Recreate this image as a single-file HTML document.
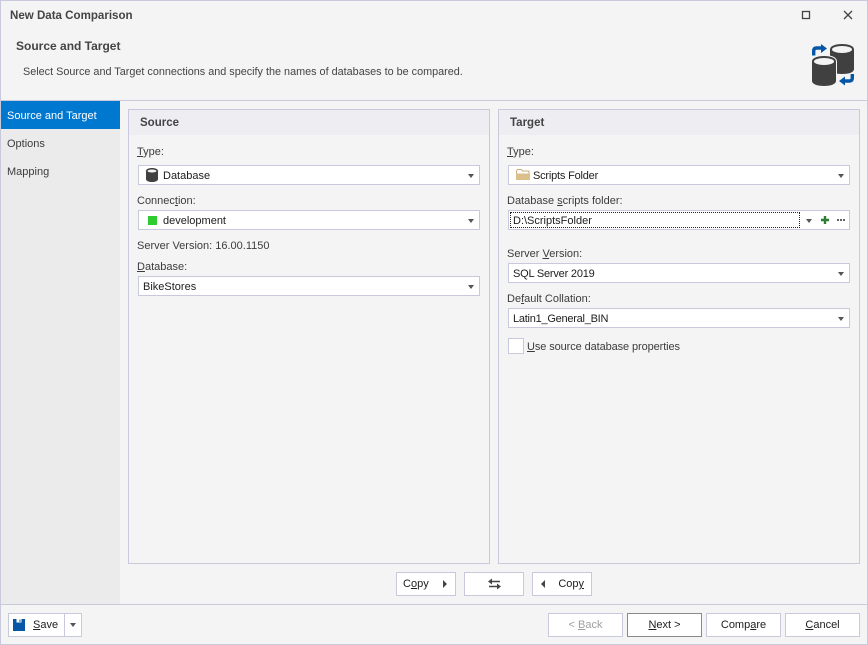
<!DOCTYPE html>
<html><head><meta charset="utf-8">
<style>
html,body{margin:0;padding:0;width:868px;height:645px;overflow:hidden;background:#f4f4f4}
body{position:relative;font-family:"Liberation Sans",sans-serif;font-size:11px;color:#3c3c3c}
.a{position:absolute}
.t{position:absolute;white-space:nowrap;line-height:14px;margin-top:1px}
.box{position:absolute;background:#fff;border:1px solid #c9c9de;box-sizing:border-box}
.arr{position:absolute;width:0;height:0;border-left:3px solid transparent;border-right:3px solid transparent;border-top:4px solid #555}
.btn{position:absolute;background:#fff;border:1px solid #c9c9de;box-sizing:border-box;text-align:center;line-height:23px;color:#202020;height:24px}
u{text-underline-offset:1px}
</style></head><body>
<div class="a" style="left:0;top:0;width:868px;height:645px;border:1px solid #c9c9de;box-sizing:border-box"></div>
<div class="t" style="left:10px;top:8px;font-weight:bold;font-size:11.56px;color:#444">New Data Comparison</div>
<div class="t" style="left:16px;top:38px;font-weight:bold;font-size:12px;color:#444">Source and Target</div>
<div class="t" style="left:23px;top:64px;color:#444;font-size:10.83px">Select Source and Target connections and specify the names of databases to be compared.</div>
<svg class="a" style="left:800px;top:8px" width="60" height="16"><rect x="2.500" y="3.500" width="7" height="7" fill="none" stroke="#444" stroke-width="1.300"/><path d="M44 3l8 8M52 3l-8 8" stroke="#444" stroke-width="1.300"/></svg>
<svg class="a" style="left:808px;top:40px" width="50" height="50">
<path d="M22 9.500C22 6 27 4 34 4s12 2 12 5.500V29c0 3-4 5-12 5s-12-2-12-5z" fill="#404040"/><ellipse cx="34" cy="9.500" rx="10" ry="3.500" fill="#f4f4f4"/>
<path d="M4 21.500C4 18 9 16 16 16s12 2 12 5.500V41c0 3-5 5-12 5S4 44 4 41z" fill="#404040" stroke="#f4f4f4" stroke-width="2" paint-order="stroke"/><ellipse cx="16" cy="21.500" rx="10" ry="3.500" fill="#f4f4f4"/>
<path d="M5.700 15.500V11q0-3 3-3h5" fill="none" stroke="#0556a5" stroke-width="3.400"/><path d="M13 4l6 4.500-6 4.500z" fill="#0556a5"/>
<path d="M44.300 34v4q0 3-3 3h-5" fill="none" stroke="#0556a5" stroke-width="3.400"/><path d="M37 36.500l-6 4.500 6 4.500z" fill="#0556a5"/>
</svg>
<div class="a" style="left:0;top:100px;width:868px;height:1px;background:#c9c9de"></div>
<div class="a" style="left:1px;top:101px;width:119px;height:503px;background:#ebebeb"></div>
<div class="a" style="left:1px;top:101px;width:119px;height:28px;background:#0078d0"></div>
<div class="t" style="left:7px;top:108px;color:#fff">Source and Target</div>
<div class="t" style="left:7px;top:136px">Options</div>
<div class="t" style="left:7px;top:164px">Mapping</div>

<div class="a" style="left:128px;top:109px;width:362px;height:455px;border:1px solid #c9c9de;box-sizing:border-box"></div>
<div class="a" style="left:129px;top:110px;width:360px;height:25px;background:#eeeef2"></div>
<div class="t" style="left:140px;top:115px;font-weight:bold;font-size:11.5px;color:#444">Source</div>
<div class="t" style="left:137px;top:144px"><u>T</u>ype:</div>
<div class="box" style="left:138px;top:165px;width:342px;height:20px"></div>
<svg class="a" style="left:146px;top:168px" width="12" height="14"><path d="M0 3c0-2 3-3 6-3s6 1 6 3v8c0 2-3 3-6 3s-6-1-6-3z" fill="#404040"/><ellipse cx="6" cy="3" rx="4.500" ry="1.500" fill="#f4f4f4"/></svg>
<div class="t" style="left:163px;top:168px;color:#202020">Database</div>
<div class="arr" style="left:468px;top:174px"></div>
<div class="t" style="left:137px;top:193px">Connec<u>t</u>ion:</div>
<div class="box" style="left:138px;top:210px;width:342px;height:20px"></div>
<div class="a" style="left:148px;top:216px;width:9px;height:9px;background:#2ecc2e"></div>
<div class="t" style="left:163px;top:213px;color:#202020">development</div>
<div class="arr" style="left:468px;top:219px"></div>
<div class="t" style="left:137px;top:238px">Server Version: 16.00.1150</div>
<div class="t" style="left:137px;top:259px"><u>D</u>atabase:</div>
<div class="box" style="left:138px;top:276px;width:342px;height:20px"></div>
<div class="t" style="left:143px;top:279px;color:#202020">BikeStores</div>
<div class="arr" style="left:468px;top:285px"></div>

<div class="a" style="left:498px;top:109px;width:362px;height:455px;border:1px solid #c9c9de;box-sizing:border-box"></div>
<div class="a" style="left:499px;top:110px;width:360px;height:25px;background:#eeeef2"></div>
<div class="t" style="left:510px;top:115px;font-weight:bold;font-size:11.5px;color:#444">Target</div>
<div class="t" style="left:507px;top:144px"><u>T</u>ype:</div>
<div class="box" style="left:508px;top:165px;width:342px;height:20px"></div>
<svg class="a" style="left:516px;top:169px" width="14" height="11"><path d="M.5 10V2L1.500.5h4l1 1.500h6.500v8z" fill="#fff" stroke="#c9ae7c"/><path d="M0 4.500h14V11H0z" fill="#dcc08c"/></svg>
<div class="t" style="left:533px;top:168px;color:#202020;letter-spacing:-.2px">Scripts Folder</div>
<div class="arr" style="left:838px;top:174px"></div>
<div class="t" style="left:507px;top:193px">Database <u>s</u>cripts folder:</div>
<div class="box" style="left:508px;top:210px;width:342px;height:20px"></div>
<div class="a" style="left:510px;top:212px;width:290px;height:16px;border:1px dotted #222;box-sizing:border-box"></div>
<div class="t" style="left:513px;top:213px;color:#202020">D:\ScriptsFolder</div>
<div class="arr" style="left:806px;top:219px"></div>
<svg class="a" style="left:820px;top:215px" width="10" height="10"><path d="M5 1v8M1 5h8" stroke="#2e7d32" stroke-width="2.400"/></svg>
<div class="a" style="left:837px;top:219px;width:2px;height:2px;background:#666;box-shadow:3px 0 #666,6px 0 #666"></div>
<div class="t" style="left:507px;top:246px">Server <u>V</u>ersion:</div>
<div class="box" style="left:508px;top:263px;width:342px;height:20px"></div>
<div class="t" style="left:513px;top:266px;color:#202020;letter-spacing:-.2px">SQL Server 2019</div>
<div class="arr" style="left:838px;top:272px"></div>
<div class="t" style="left:507px;top:291px">De<u>f</u>ault Collation:</div>
<div class="box" style="left:508px;top:308px;width:342px;height:20px"></div>
<div class="t" style="left:513px;top:311px;color:#202020;letter-spacing:-.25px">Latin1_General_BIN</div>
<div class="arr" style="left:838px;top:317px"></div>
<div class="box" style="left:508px;top:338px;width:16px;height:16px"></div>
<div class="t" style="left:527px;top:339px;letter-spacing:-.1px"><u>U</u>se source database properties</div>

<div class="btn" style="left:396px;top:572px;width:60px;text-align:left;padding-left:6px">C<u>o</u>py</div>
<div class="a" style="left:443px;top:580px;width:0;height:0;border-left:4px solid #444;border-top:4px solid transparent;border-bottom:4px solid transparent"></div>
<div class="btn" style="left:464px;top:572px;width:60px"></div>
<svg class="a" style="left:488px;top:578px" width="13" height="12"><path d="M2 3.500h10M1 8.500h9" stroke="#444" stroke-width="1.600"/><path d="M4 .5L0 3.500 4 6.500zM9 5.500l4 3-4 3z" fill="#444"/></svg>
<div class="btn" style="left:532px;top:572px;width:60px;text-align:right;padding-right:7px">Cop<u>y</u></div>
<div class="a" style="left:541px;top:580px;width:0;height:0;border-right:4px solid #444;border-top:4px solid transparent;border-bottom:4px solid transparent"></div>

<div class="a" style="left:0;top:604px;width:868px;height:1px;background:#c9c9de"></div>
<div class="btn" style="left:8px;top:613px;width:57px;text-align:left;padding-left:24px"><u>S</u>ave</div>
<svg class="a" style="left:13px;top:619px" width="12" height="12"><path d="M0 0h12v12H0z" fill="#0556a5"/><path d="M3.500 0h5v3.500h-5z" fill="#fff"/><path d="M6.500 .5h1v2.500h-1z" fill="#0556a5"/></svg>
<div class="btn" style="left:64px;top:613px;width:18px"></div>
<div class="arr" style="left:70px;top:623px"></div>
<div class="btn" style="left:548px;top:613px;width:75px;color:#a0a0a0">&lt; <u>B</u>ack</div>
<div class="btn" style="left:627px;top:613px;width:75px;border-color:#8a8a8a"><u>N</u>ext &gt;</div>
<div class="btn" style="left:706px;top:613px;width:75px">Comp<u>a</u>re</div>
<div class="btn" style="left:785px;top:613px;width:75px"><u>C</u>ancel</div>
</body></html>
